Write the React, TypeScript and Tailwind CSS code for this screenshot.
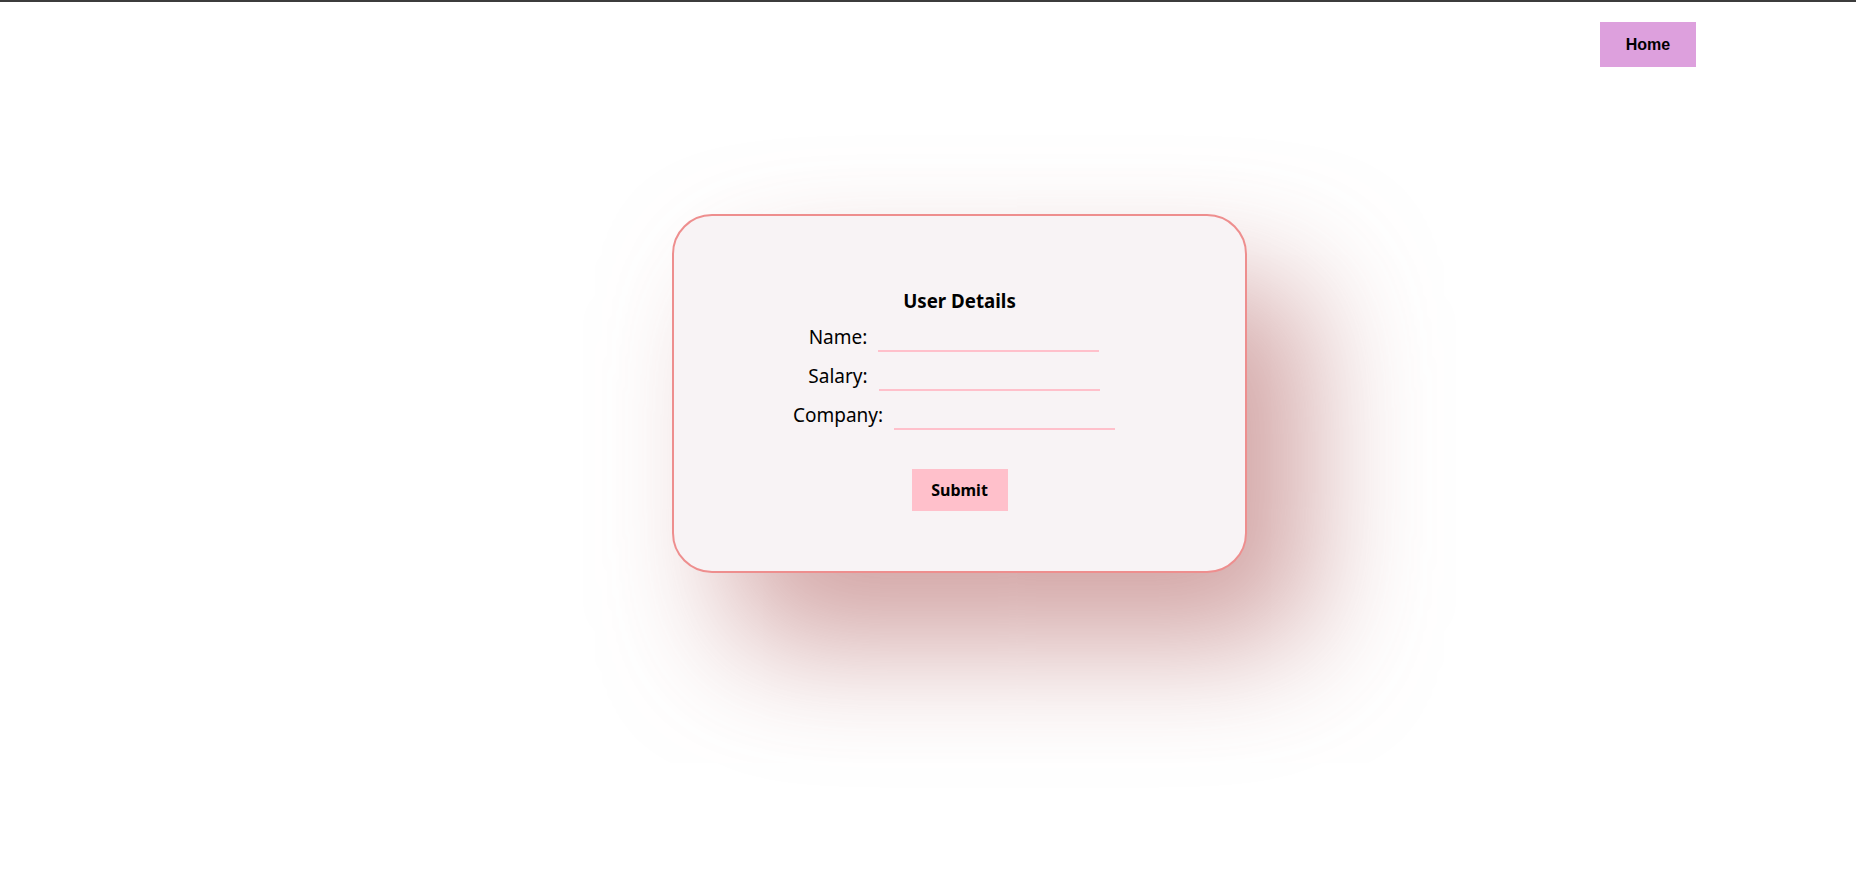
import React from 'react';

const Field = ({ label }: { label: string }) => {
  return (
    <div className="flex items-end justify-center gap-[11px] pr-[11px]">
      <label className="text-[19px] leading-[26px] text-black">{label}</label>
      <input
        type="text"
        className="w-[221px] h-[24px] mb-[-2px] bg-transparent border-0 border-b-2 border-[#ffc0cb] outline-none text-[16px]"
      />
    </div>
  );
};

const App = () => {
  return (
    <div className="min-h-[893px] bg-white font-['Noto_Sans',sans-serif] overflow-hidden">
      {/* top strip */}
      <div className="h-[2px] bg-[#3c3c3c]" />

      {/* header */}
      <div className="flex justify-end pt-[20px] pr-[160px]">
        <button className="w-[96px] h-[45px] bg-[#dda0dd] text-[16px] font-bold text-black font-['Liberation_Sans',Arial,sans-serif]">
          Home
        </button>
      </div>

      {/* card */}
      <div className="ml-[672px] mt-[147px] w-[575px] h-[359px] rounded-[40px] border-2 border-[#ee8e8e] bg-[#f8f3f5] shadow-[60px_70px_125px_rgba(175,95,95,0.58)] flex flex-col items-center pt-[72px]">
        <h3 className="text-[18.72px] leading-[26px] font-bold text-black mb-[10px]">User Details</h3>
        <div className="flex flex-col gap-[13px]">
          <Field label="Name:" />
          <Field label="Salary:" />
          <Field label="Company:" />
        </div>
        <button className="mt-[41px] w-[96px] h-[42px] bg-[#ffc0cb] text-[16px] font-bold text-black">
          Submit
        </button>
      </div>
    </div>
  );
};

export default App;
